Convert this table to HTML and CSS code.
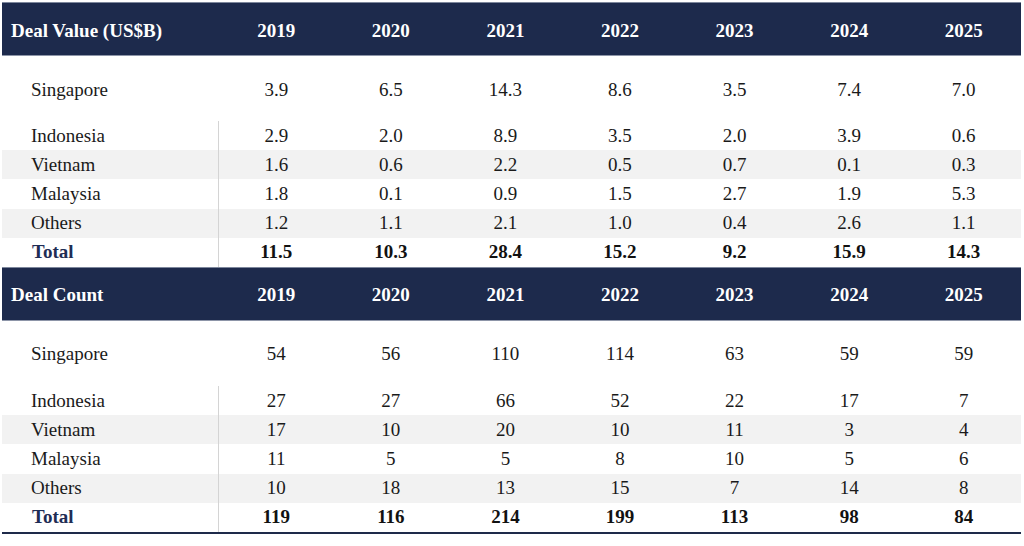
FILE: index.html
```html
<!DOCTYPE html>
<html>
<head>
<meta charset="utf-8">
<link rel="stylesheet" href="styles.css">
</head>
<body>
<div class="sheet">
  <section class="block">
    <div class="row head"><div class="label">Deal Value (US$B)</div><div>2019</div><div>2020</div><div>2021</div><div>2022</div><div>2023</div><div>2024</div><div>2025</div></div>
    <div class="row lead"><div class="label">Singapore</div><div>3.9</div><div>6.5</div><div>14.3</div><div>8.6</div><div>3.5</div><div>7.4</div><div>7.0</div></div>
    <div class="row data"><div class="label">Indonesia</div><div>2.9</div><div>2.0</div><div>8.9</div><div>3.5</div><div>2.0</div><div>3.9</div><div>0.6</div></div>
    <div class="row data alt"><div class="label">Vietnam</div><div>1.6</div><div>0.6</div><div>2.2</div><div>0.5</div><div>0.7</div><div>0.1</div><div>0.3</div></div>
    <div class="row data"><div class="label">Malaysia</div><div>1.8</div><div>0.1</div><div>0.9</div><div>1.5</div><div>2.7</div><div>1.9</div><div>5.3</div></div>
    <div class="row data alt"><div class="label">Others</div><div>1.2</div><div>1.1</div><div>2.1</div><div>1.0</div><div>0.4</div><div>2.6</div><div>1.1</div></div>
    <div class="row data total"><div class="label">Total</div><div>11.5</div><div>10.3</div><div>28.4</div><div>15.2</div><div>9.2</div><div>15.9</div><div>14.3</div></div>
  </section>
  <section class="block last">
    <div class="row head"><div class="label">Deal Count</div><div>2019</div><div>2020</div><div>2021</div><div>2022</div><div>2023</div><div>2024</div><div>2025</div></div>
    <div class="row lead"><div class="label">Singapore</div><div>54</div><div>56</div><div>110</div><div>114</div><div>63</div><div>59</div><div>59</div></div>
    <div class="row data"><div class="label">Indonesia</div><div>27</div><div>27</div><div>66</div><div>52</div><div>22</div><div>17</div><div>7</div></div>
    <div class="row data alt"><div class="label">Vietnam</div><div>17</div><div>10</div><div>20</div><div>10</div><div>11</div><div>3</div><div>4</div></div>
    <div class="row data"><div class="label">Malaysia</div><div>11</div><div>5</div><div>5</div><div>8</div><div>10</div><div>5</div><div>6</div></div>
    <div class="row data alt"><div class="label">Others</div><div>10</div><div>18</div><div>13</div><div>15</div><div>7</div><div>14</div><div>8</div></div>
    <div class="row data total"><div class="label">Total</div><div>119</div><div>116</div><div>214</div><div>199</div><div>113</div><div>98</div><div>84</div></div>
  </section>
</div>
</body>
</html>
```

FILE: styles.css
```css
html, body {
  margin: 0;
  padding: 0;
  background: #ffffff;
}
body {
  font-family: "Liberation Serif", "Times New Roman", serif;
  color: #1a1a1a;
}
.sheet {
  width: 1019px;
  padding: 2px 0 0 2px;
}
.block.last {
  border-bottom: 2px solid #1e2a4a;
}
.row {
  display: grid;
  grid-template-columns: 217px repeat(7, 1fr);
  align-items: center;
  text-align: center;
}
.row .label {
  text-align: left;
  padding-left: 29px;
}
.head {
  height: 54px;
  padding-top: 3px;
  box-sizing: border-box;
  background: #1d2a4c;
  color: #ffffff;
  font-weight: bold;
  font-size: 19px;
  box-shadow: inset 0 1px 0 #7d879c, inset 0 -1px 0 #8d95a8;
}
.head .label {
  padding-left: 9px;
}
.lead {
  height: 65px;
  font-size: 19px;
  padding-top: 2px;
  box-sizing: border-box;
}
.data {
  height: 29.2px;
  font-size: 19px;
}
.data .label {
  align-self: stretch;
  display: flex;
  align-items: center;
  border-right: 1px solid #d4d4d4;
}
.alt {
  background: #f2f2f2;
}
.total {
  font-weight: bold;
  color: #111111;
}
.total .label {
  color: #1f2d55;
  padding-left: 30px;
}
```
